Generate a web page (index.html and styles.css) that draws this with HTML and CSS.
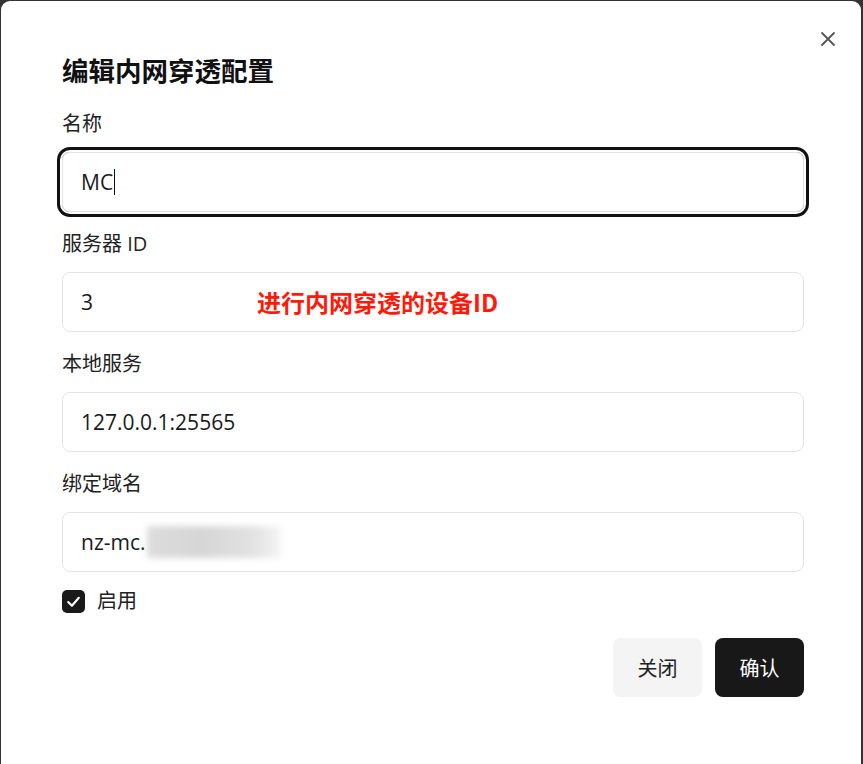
FILE: index.html
```html
<!DOCTYPE html>
<html lang="zh">
<head>
<meta charset="utf-8">
<link rel="stylesheet" href="styles.css">
</head>
<body>
<div class="dialog">
  <button class="close" aria-label="关闭">
    <svg width="16" height="16" viewBox="0 0 16 16"><path d="M2 2 L14 14 M14 2 L2 14" stroke="#555" stroke-width="1.8" stroke-linecap="round" fill="none"/></svg>
  </button>
  <h2 class="title">编辑内网穿透配置</h2>
  <div class="fields">
    <div class="field">
      <div class="label">名称</div>
      <div class="input focused">MC<span class="caret"></span></div>
    </div>
    <div class="field">
      <div class="label">服务器 ID</div>
      <div class="input">3<span class="note">进行内网穿透的设备ID</span></div>
    </div>
    <div class="field">
      <div class="label">本地服务</div>
      <div class="input">127.0.0.1:25565</div>
    </div>
    <div class="field">
      <div class="label">绑定域名</div>
      <div class="input">nz-mc.<span class="blur"></span></div>
    </div>
  </div>
  <label class="check">
    <span class="box"><svg width="17" height="17" viewBox="0 0 16 16"><path d="M3 8.5 L6.5 12 L13 4.5" stroke="#fff" stroke-width="2" fill="none" stroke-linecap="round" stroke-linejoin="round"/></svg></span>
    <span>启用</span>
  </label>
  <div class="actions">
    <button class="btn secondary">关闭</button>
    <button class="btn primary">确认</button>
  </div>
</div>
</body>
</html>
```
FILE: styles.css
```css
html, body {
  margin: 0;
  padding: 0;
}
body {
  background: #333;
  width: 863px;
  height: 764px;
  overflow: hidden;
  font-family: "Open Sans", "Noto Sans CJK SC", sans-serif;
  color: #111;
}
.dialog {
  position: relative;
  box-sizing: border-box;
  margin: 1px 0 0 1px;
  width: 860px;
  height: 800px;
  background: #fff;
  border-radius: 9px 9px 0 0;
  padding: 51px 57px 0 61px;
}
.close {
  position: absolute;
  top: 30px;
  right: 25px;
  width: 16px;
  height: 16px;
  padding: 0;
  border: 0;
  background: none;
  display: flex;
}
.title {
  margin: 0;
  font-family: "Noto Sans CJK SC", sans-serif;
  font-size: 26.5px;
  font-weight: 700;
  line-height: 36px;
  color: #111;
}
.fields {
  margin-top: 22px;
  display: flex;
  flex-direction: column;
  gap: 18px;
}
.field {
  display: flex;
  flex-direction: column;
  gap: 14px;
}
.label {
  font-size: 20px;
  line-height: 28px;
  color: #222;
}
.input {
  position: relative;
  box-sizing: border-box;
  height: 60px;
  border: 1px solid #e4e4e4;
  border-radius: 8px;
  padding: 0 18px;
  display: flex;
  align-items: center;
  font-size: 21px;
  color: #1a1a1a;
}
.input.focused {
  box-shadow: 0 0 0 2px #fff, 0 0 0 5px #111;
}
.caret {
  display: inline-block;
  width: 1px;
  height: 26px;
  background: #111;
  margin-left: 1px;
}
.note {
  position: absolute;
  left: 194px;
  top: 14px;
  font-family: "Noto Sans CJK SC", sans-serif;
  font-size: 24px;
  font-weight: 700;
  line-height: 30px;
  color: #ff1a0a;
}
.blur {
  display: inline-block;
  width: 134px;
  height: 32px;
  margin-left: 1px;
  background: linear-gradient(90deg, #dcdcdc 0%, #d6d6d6 40%, #e2e2e2 80%, #f6f6f6 100%);
  filter: blur(3px);
}
.check {
  margin-top: 17px;
  display: flex;
  align-items: center;
  gap: 12px;
  font-size: 20px;
  line-height: 24px;
  color: #222;
}
.box {
  width: 23px;
  height: 23px;
  border-radius: 5px;
  background: #1a1a1a;
  display: flex;
  align-items: center;
  justify-content: center;
}
.actions {
  margin-top: 25px;
  display: flex;
  justify-content: flex-end;
  gap: 13px;
}
.btn {
  width: 89px;
  height: 59px;
  border: 0;
  border-radius: 8px;
  font-family: "Noto Sans CJK SC", sans-serif;
  font-size: 20px;
}
.secondary {
  background: #f4f4f4;
  color: #222;
}
.primary {
  background: #181818;
  color: #fff;
}
```
